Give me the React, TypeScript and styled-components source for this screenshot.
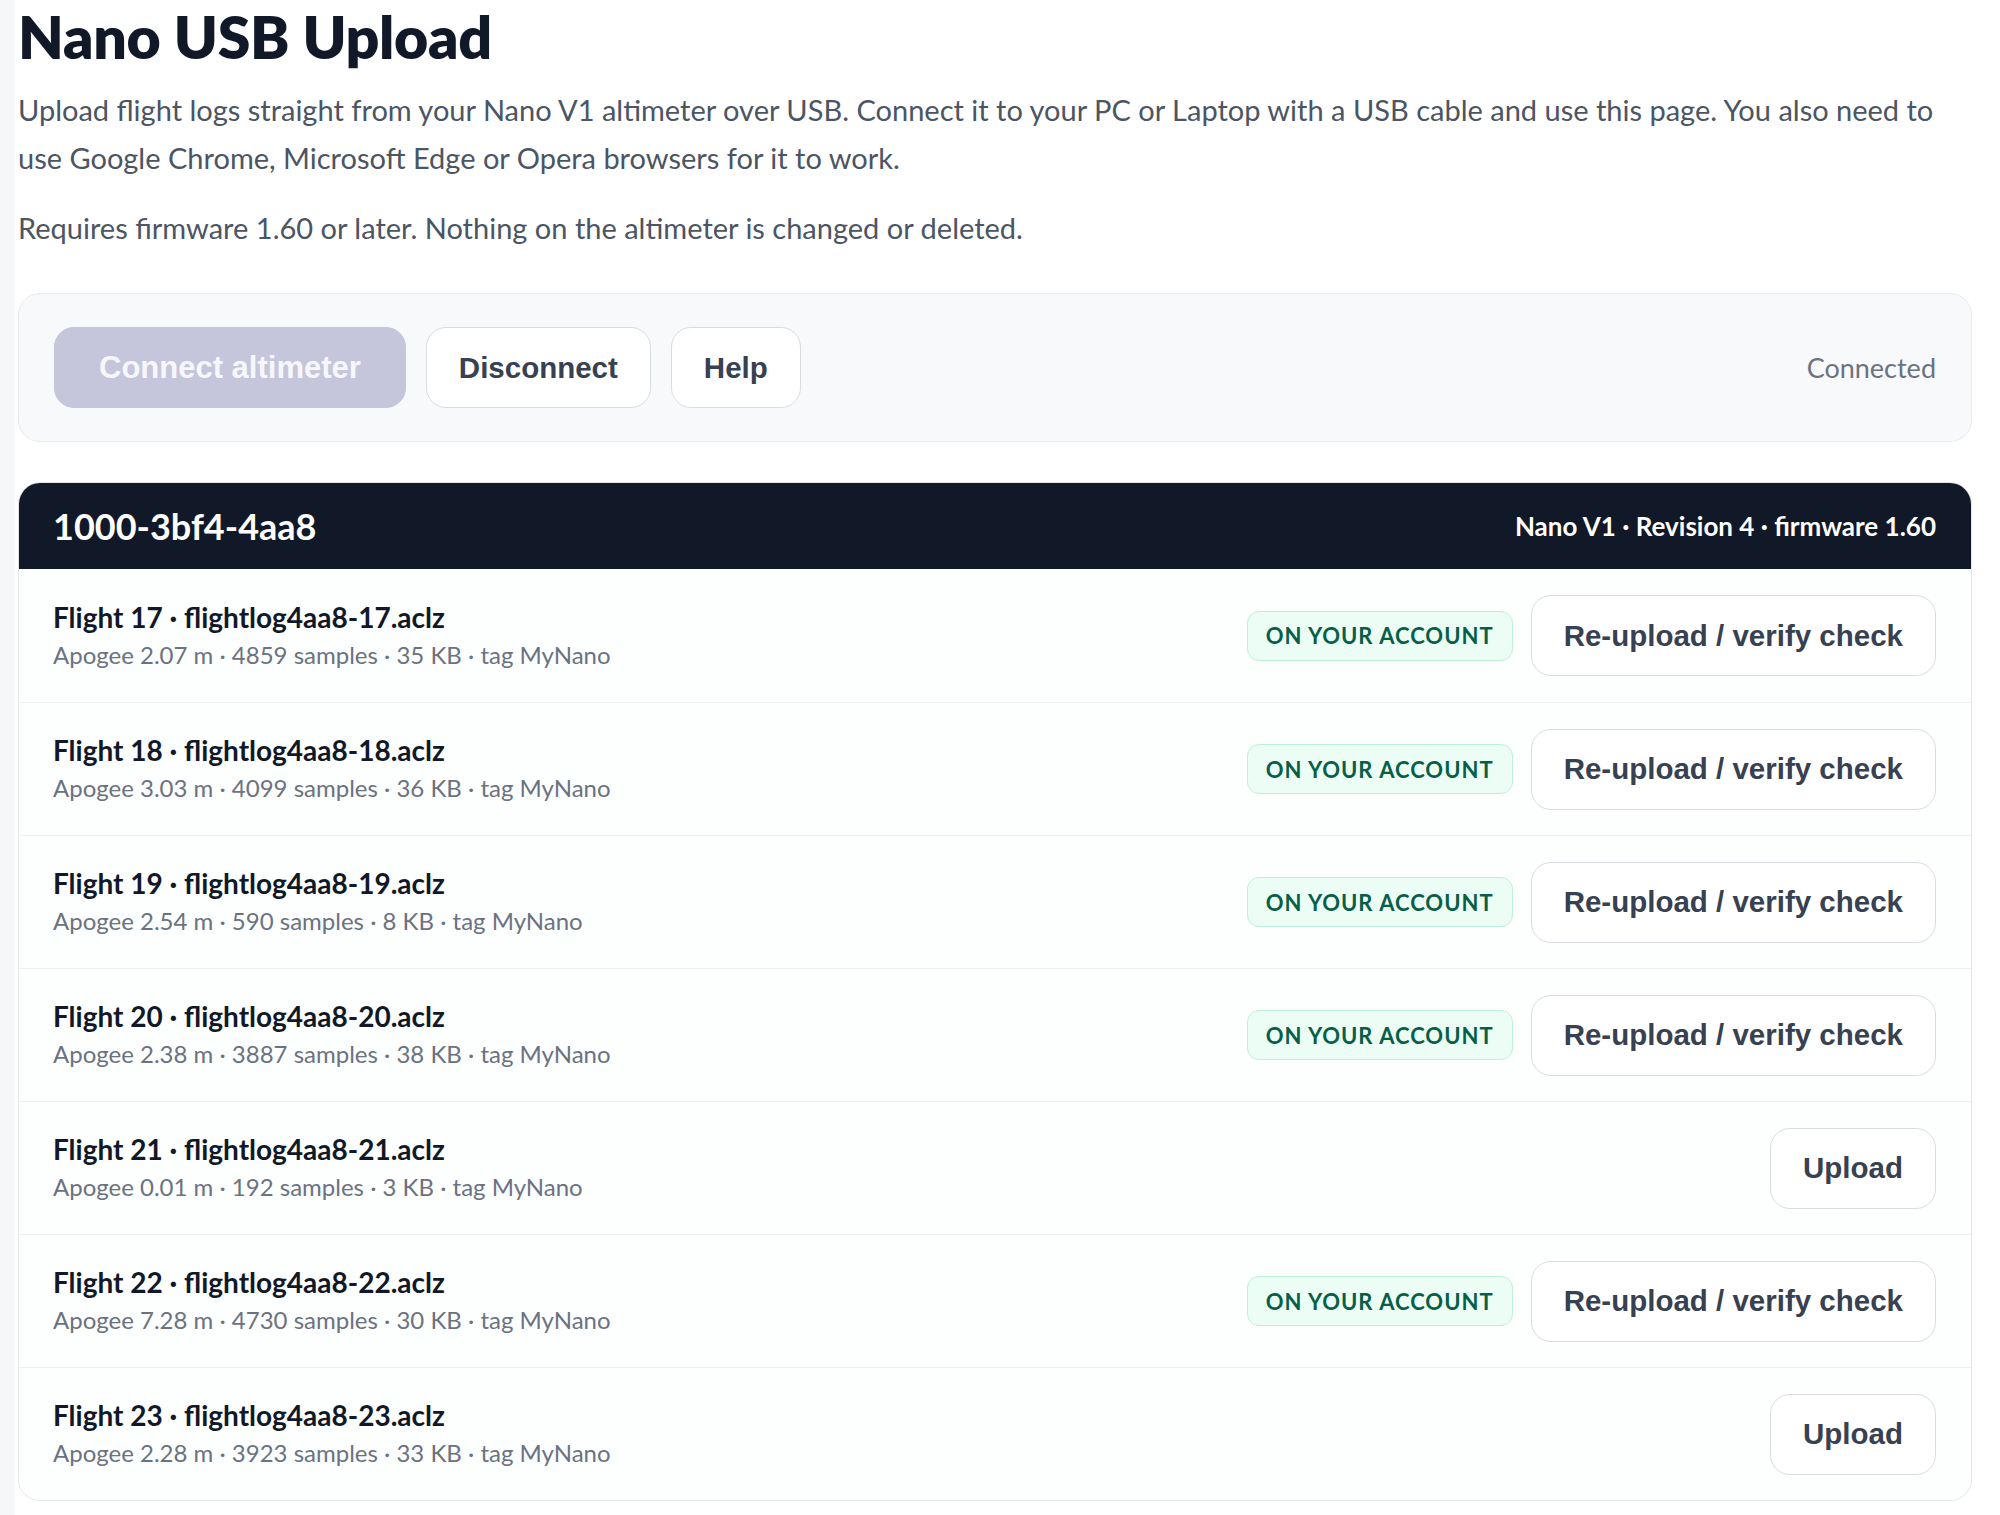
import React from 'react'
import styled, { createGlobalStyle } from 'styled-components'

interface FlightLog {
  flight: number
  apogee: string
  samples: number
  sizeKb: number
  uploaded: boolean
}

const logs: FlightLog[] = [
  { flight: 17, apogee: '2.07', samples: 4859, sizeKb: 35, uploaded: true },
  { flight: 18, apogee: '3.03', samples: 4099, sizeKb: 36, uploaded: true },
  { flight: 19, apogee: '2.54', samples: 590, sizeKb: 8, uploaded: true },
  { flight: 20, apogee: '2.38', samples: 3887, sizeKb: 38, uploaded: true },
  { flight: 21, apogee: '0.01', samples: 192, sizeKb: 3, uploaded: false },
  { flight: 22, apogee: '7.28', samples: 4730, sizeKb: 30, uploaded: true },
  { flight: 23, apogee: '2.28', samples: 3923, sizeKb: 33, uploaded: false },
]

const deviceId = '1000-3bf4-4aa8'
const tag = 'MyNano'

const App: React.FC = () => {
  return (
    <>
      <GlobalStyle />
      <Page>
        <Rail />
        <Main>
          <Title>Nano USB Upload</Title>
          <Lead>
            Upload flight logs straight from your Nano V1 altimeter over USB. Connect it to your PC or
            Laptop with a USB cable and use this page. You also need to use Google Chrome, Microsoft
            Edge or Opera browsers for it to work.
          </Lead>
          <Lead>Requires firmware 1.60 or later. Nothing on the altimeter is changed or deleted.</Lead>

          <Toolbar>
            <Button primary disabled>
              Connect altimeter
            </Button>
            <Button>Disconnect</Button>
            <Button>Help</Button>
            <Status>Connected</Status>
          </Toolbar>

          <Card>
            <CardHeader>
              <DeviceId>{deviceId}</DeviceId>
              <DeviceInfo>Nano V1 · Revision 4 · firmware 1.60</DeviceInfo>
            </CardHeader>
            {logs.map((log) => (
              <Row key={log.flight}>
                <RowText>
                  <RowTitle>
                    Flight {log.flight} · flightlog4aa8-{log.flight}.aclz
                  </RowTitle>
                  <RowMeta>
                    Apogee {log.apogee} m · {log.samples} samples · {log.sizeKb} KB · tag {tag}
                  </RowMeta>
                </RowText>
                <RowActions>
                  {log.uploaded && <Badge>On your account</Badge>}
                  <Button>{log.uploaded ? 'Re-upload / verify check' : 'Upload'}</Button>
                </RowActions>
              </Row>
            ))}
          </Card>
        </Main>
      </Page>
    </>
  )
}
export default App

const GlobalStyle = createGlobalStyle`
  html, body {
    margin: 0;
    padding: 0;
    background: #ffffff;
  }
  body {
    font-family: Lato, "Open Sans", "Liberation Sans", sans-serif;
    color: #111827;
    -webkit-font-smoothing: antialiased;
  }
`

const Page = styled.div`
  display: flex;
  min-height: 1515px;
`

const Rail = styled.div`
  flex: 0 0 15px;
  background: #f6f7f9;
`

const Main = styled.div`
  flex: 1;
  min-width: 0;
  padding: 3px 28px 15px 3px;
`

const Title = styled.h1`
  margin: 0;
  font-size: 59px;
  line-height: 67px;
  font-weight: 800;
  color: #111827;
  letter-spacing: -0.3px;
`

const Lead = styled.p`
  max-width: 1925px;
  margin: 16px 0 0;
  font-size: 29px;
  line-height: 48px;
  color: #4b5563;

  & + & {
    margin-top: 22px;
  }
`

const Toolbar = styled.div`
  margin-top: 41px;
  display: flex;
  align-items: center;
  gap: 20px;
  padding: 33px 35px;
  background: #f8f9fb;
  border: 1px solid #e8eaee;
  border-radius: 22px;
`

const Button = styled.button<{ primary?: boolean }>`
  height: 81px;
  padding: 0 ${(p) => (p.primary ? 44 : 32)}px;
  border-radius: 20px;
  border: 1px solid ${(p) => (p.primary ? '#c5c6db' : '#d9dce1')};
  background: ${(p) => (p.primary ? '#c5c6db' : '#ffffff')};
  color: ${(p) => (p.primary ? '#f7f7fb' : '#374151')};
  font-family: "Liberation Sans", Arial, sans-serif;
  font-size: ${(p) => (p.primary ? 31 : 29.5)}px;
  font-weight: 700;
  white-space: nowrap;
  cursor: pointer;

  &:disabled {
    cursor: default;
  }
`

const Status = styled.span`
  margin-left: auto;
  font-size: 27px;
  color: #6b7280;
`

const Card = styled.div`
  margin-top: 40px;
  border: 1px solid #e3e5e9;
  border-radius: 22px;
  overflow: hidden;
  background: #ffffff;
`

const CardHeader = styled.div`
  height: 86px;
  padding: 0 35px 0 34px;
  display: flex;
  align-items: center;
  justify-content: space-between;
  background: #111827;
  color: #ffffff;
`

const DeviceId = styled.span`
  font-size: 36px;
  font-weight: 700;
`

const DeviceInfo = styled.span`
  font-size: 26px;
  font-weight: 700;
`

const Row = styled.div`
  height: 133px;
  box-sizing: border-box;
  padding: 0 35px 0 34px;
  display: flex;
  align-items: center;
  justify-content: space-between;
  background: #fdfefe;

  & + & {
    border-top: 1px solid #f0f1f3;
  }
`

const RowText = styled.div`
  display: flex;
  flex-direction: column;
  padding-top: 2px;
`

const RowTitle = styled.span`
  font-size: 28px;
  line-height: 36px;
  font-weight: 700;
  color: #111827;
`

const RowMeta = styled.span`
  font-size: 24px;
  line-height: 40px;
  color: #6b7280;
`

const RowActions = styled.div`
  display: flex;
  align-items: center;
  gap: 18px;
`

const Badge = styled.span`
  height: 50px;
  box-sizing: border-box;
  display: inline-flex;
  align-items: center;
  padding: 0 18px;
  border-radius: 12px;
  border: 1px solid #bdf0d8;
  background: #ecfdf5;
  color: #065f46;
  font-size: 22px;
  font-weight: 700;
  letter-spacing: 1px;
  text-transform: uppercase;
`
